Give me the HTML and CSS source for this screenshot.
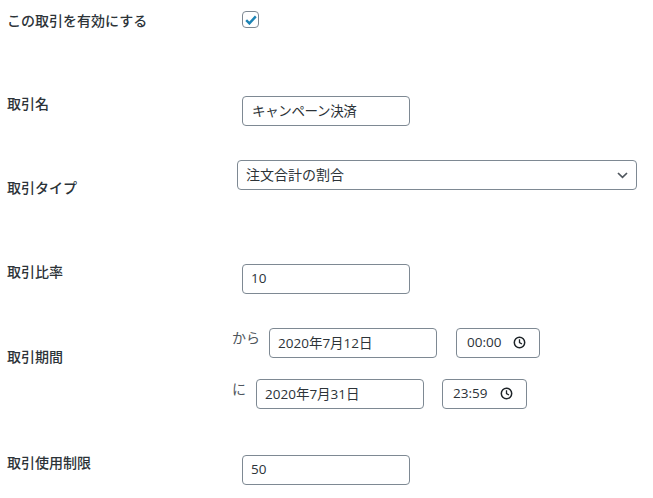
FILE: index.html
```html
<!DOCTYPE html>
<html lang="ja">
<head>
<meta charset="utf-8">
<title>取引設定</title>
<link rel="stylesheet" href="styles.css">
</head>
<body>
<form class="form">
  <div class="row row-enable">
    <div class="label">この取引を有効にする</div>
    <div class="field"><span class="check"><svg width="12" height="10" viewBox="0 0 12 10"><path d="M1.2 5.2 4.4 8.4 10.8 1.4" fill="none" stroke="#1d84b5" stroke-width="2.4"/></svg></span></div>
  </div>
  <div class="row row-name">
    <div class="label raised">取引名</div>
    <div class="field"><div class="box wide name">キャンペーン決済</div></div>
  </div>
  <div class="row row-type">
    <div class="label">取引タイプ</div>
    <div class="field"><div class="box select">注文合計の割合<svg width="11" height="7" viewBox="0 0 11 7"><path d="M1 1 5.5 5.4 10 1" fill="none" stroke="#50575e" stroke-width="1.7"/></svg></div></div>
  </div>
  <div class="row row-rate">
    <div class="label raised">取引比率</div>
    <div class="field"><div class="box wide">10</div></div>
  </div>
  <div class="row row-period">
    <div class="label">取引期間</div>
    <div class="field stack">
      <div class="range range-from">
        <span class="tag">から</span>
        <div class="box wide">2020年7月12日</div>
        <div class="box time">00:00<svg width="13" height="13" viewBox="0 0 13 13"><circle cx="6.5" cy="6.5" r="5.2" fill="none" stroke="#1d2327" stroke-width="1.5"/><path d="M6.5 3.2V6.6L9 8" fill="none" stroke="#1d2327" stroke-width="1.3"/></svg></div>
      </div>
      <div class="range range-to">
        <span class="tag">に</span>
        <div class="box wide">2020年7月31日</div>
        <div class="box time">23:59<svg width="13" height="13" viewBox="0 0 13 13"><circle cx="6.5" cy="6.5" r="5.2" fill="none" stroke="#1d2327" stroke-width="1.5"/><path d="M6.5 3.2V6.6L9 8" fill="none" stroke="#1d2327" stroke-width="1.3"/></svg></div>
      </div>
    </div>
  </div>
  <div class="row row-limit">
    <div class="label raised">取引使用制限</div>
    <div class="field"><div class="box wide">50</div></div>
  </div>
</form>
</body>
</html>
```
FILE: styles.css
```css
* { box-sizing: border-box; }
html, body { margin: 0; height: 498px; overflow: hidden; background: #fff; }
body { font-family: "Open Sans", "Noto Sans CJK JP", sans-serif; color: #2c3338; }
.form { display: flex; flex-direction: column; padding-left: 8px; }
.row { display: flex; }
.label { width: 234px; flex: none; font-size: 14px; font-weight: 500; line-height: 20px; color: #2c3338; margin-left: -1px; margin-right: 1px; }
.raised { margin-top: -2px; }
.field { flex: none; }
.box { display: flex; align-items: center; height: 30px; border: 1px solid #7e8993; border-radius: 4px; background: #fff; font-size: 13.5px; padding: 0 8px 3px; color: #2c3338; }
.wide { width: 168px; }
.name { padding-left: 9px; letter-spacing: -0.35px; }
.check { display: flex; align-items: center; justify-content: center; width: 17px; height: 17px; border: 1px solid #7e8993; border-radius: 4px; }
.row-enable { padding-top: 11px; height: 96px; }
.row-name { height: 64px; }
.row-type { height: 104px; }
.row-type .field { margin-left: -5px; }
.row-type .label { padding-top: 18px; }
.select { width: 400px; justify-content: space-between; padding: 0 8px 3px 8px; font-size: 14px; }
.select svg { margin-top: 3px; }
.row-rate { height: 64px; }
.row-period { height: 127px; }
.row-period .label { padding-top: 19px; }
.stack { display: flex; flex-direction: column; gap: 21px; margin-left: -10px; }
.range { display: flex; }
.tag { font-size: 14px; line-height: 20px; margin-top: 0; color: #50575e; }
.range-from .tag { width: 37px; }
.range-to .tag { width: 24px; }
.time { justify-content: space-between; padding-left: 10px; padding-right: 13px; }
.time svg { margin-top: 2px; }
.range-from .time { width: 84px; margin-left: 19px; }
.range-to .time { width: 85px; margin-left: 18px; }
```
